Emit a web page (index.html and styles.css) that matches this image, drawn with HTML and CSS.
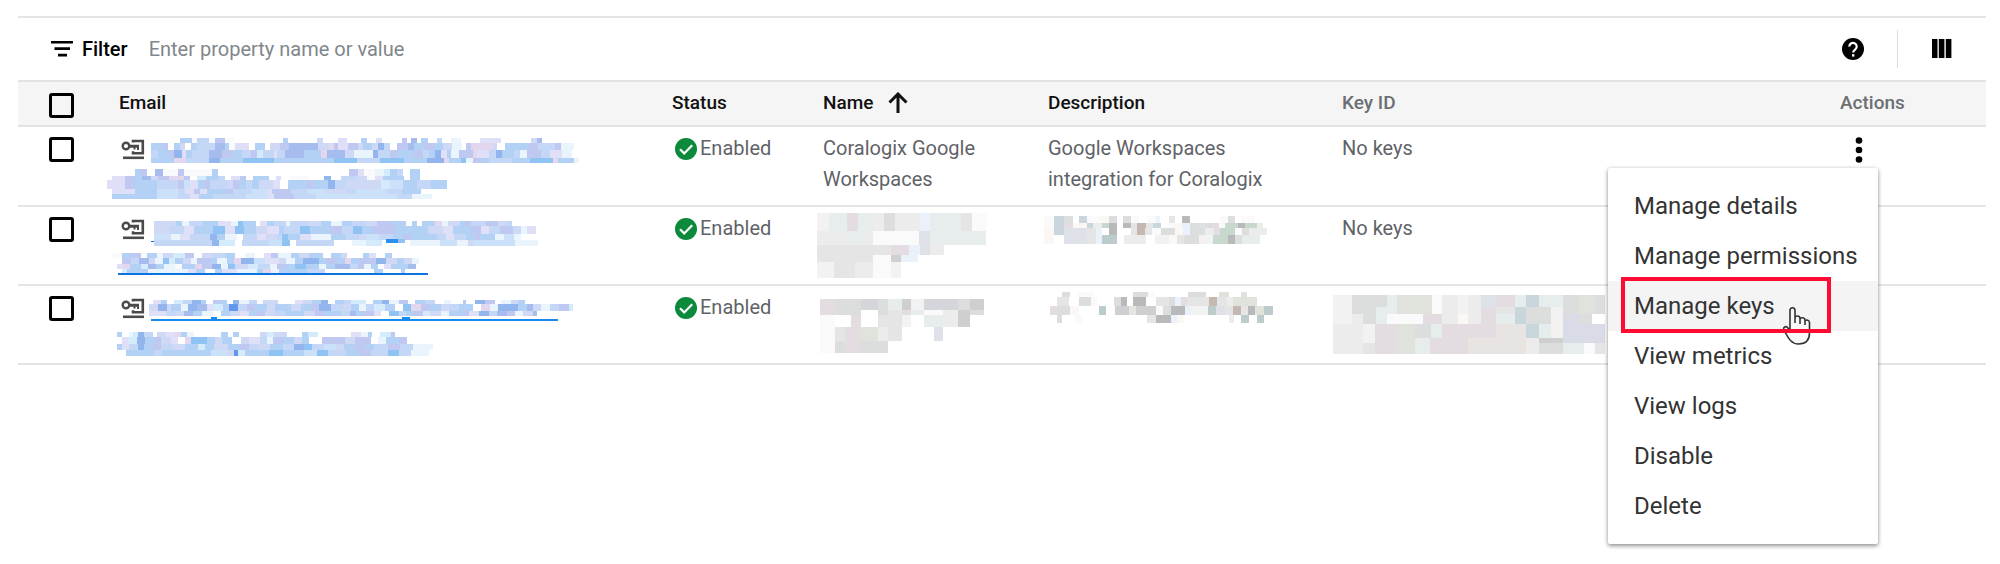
FILE: index.html
```html
<!DOCTYPE html>
<html lang="en">
<head>
<meta charset="utf-8">
<title>Service accounts</title>
<link rel="stylesheet" href="styles.css">
</head>
<body>
<svg class="defs" width="0" height="0" aria-hidden="true">
  <symbol id="key" viewBox="-2 0 26 22">
    <circle cx="5" cy="7" r="3.300" fill="none" stroke="#4a4a4a" stroke-width="2.400"/>
    <path d="M8 5.700h10v5.300h-2V8.700h-1.500V10.500h-2V8.700H8z" fill="#4a4a4a"/>
    <path d="M12 3.500V2h9.800v12.200H12v-2" fill="none" stroke="#4a4a4a" stroke-width="2.600"/>
    <path d="M2 17.500h21v2.600H2z" fill="#4a4a4a"/>
  </symbol>
  <symbol id="ok" viewBox="0 0 22 22">
    <circle cx="11" cy="11" r="11" fill="#0a8a3a"/>
    <path d="M5 11.200l4.200 4.200 8-8.200" fill="none" stroke="#fff" stroke-width="2.200"/>
  </symbol>
</svg>
<main class="panel">
  <form class="filter">
    <svg class="filter-icon" viewBox="0 0 22 16" aria-hidden="true"><path d="M0 0h22v2.600H0zM3.500 6.300h15.500v2.600H3.500zM7 12.800h9v2.600H7z"/></svg>
    <label class="filter-label" for="filter">Filter</label>
    <input class="filter-input" id="filter" type="text" placeholder="Enter property name or value">
    <button class="icon-button help" type="button" aria-label="Help">
      <svg width="22" height="22" viewBox="0 0 22 22"><circle cx="11" cy="11" r="11"/><path d="M7.300 8.600a3.700 3.600 0 1 1 6 2.700c-1.400 1-2.100 1.500-2.100 3.200" fill="none" stroke="#fff" stroke-width="2.200"/><path d="M10 16.200h2.400v2.400H10z" fill="#fff"/></svg>
    </button>
    <span class="divider"></span>
    <button class="icon-button" type="button" aria-label="Column display options">
      <svg width="20" height="20" viewBox="0 0 20 20"><path d="M0 0h5.500v19H0zM6.800 0h5.600v19H6.800zM13.800 0h5.600v19h-5.600z"/></svg>
    </button>
  </form>
  <table class="accounts">
    <colgroup><col class="c-check"><col class="c-email"><col class="c-status"><col class="c-name"><col class="c-desc"><col class="c-key"><col class="c-actions"></colgroup>
    <thead>
      <tr>
        <th class="check"><input type="checkbox" aria-label="Select all"></th>
        <th>Email</th>
        <th>Status</th>
        <th><span class="sorted">Name <svg width="20" height="21" viewBox="0 0 20 21" aria-hidden="true"><path d="M10 21V2M1.500 10.500L10 2l8.500 8.500" fill="none" stroke="#111" stroke-width="3"/></svg></span></th>
        <th>Description</th>
        <th class="muted">Key ID</th>
        <th class="muted">Actions</th>
      </tr>
    </thead>
    <tbody>
      <tr>
        <td class="check"><input type="checkbox" aria-label="Select account 1"></td>
        <td><a class="email" href="#" aria-label="Account 1">
          <span class="email-line"><svg class="key-icon"><use href="#key"/></svg><svg data-mosaic="e1a"></svg></span>
          <span class="email-line outdent"><svg data-mosaic="e1b"></svg></span></a></td>
        <td><span class="status"><svg class="ok-icon"><use href="#ok"/></svg>Enabled</span></td>
        <td class="text">Coralogix Google<br>Workspaces</td>
        <td class="text">Google Workspaces<br>integration for Coralogix</td>
        <td class="text">No keys</td>
        <td class="actions">
          <button class="icon-button more" type="button" aria-label="Actions" aria-expanded="true"><svg width="8" height="26" viewBox="0 0 8 26"><circle cx="4" cy="3.500" r="3.300"/><circle cx="4" cy="13" r="3.300"/><circle cx="4" cy="22.500" r="3.300"/></svg></button>
          <div class="menu" role="menu">
            <button type="button" role="menuitem">Manage details</button>
            <button type="button" role="menuitem">Manage permissions</button>
            <button class="hovered" type="button" role="menuitem">Manage keys</button>
            <button type="button" role="menuitem">View metrics</button>
            <button type="button" role="menuitem">View logs</button>
            <button type="button" role="menuitem">Disable</button>
            <button type="button" role="menuitem">Delete</button>
            <svg class="pointer" viewBox="0 0 30 40" aria-hidden="true"><path d="M8 25V4.500c0-3.600 5-3.600 5 0V17v-5.500c1-2.600 5-1.600 5 1V18v-5c1-2.200 5-1.400 5 1.200V19v-4c1.500-1.800 4.500-.8 4.500 1.500V27c0 7-4 11-11 11C10 38 7 34 2 24c-1.500-3 2-4.500 4-2l2 3" fill="#f7f7f7" stroke="#333" stroke-width="1.600"/></svg>
            <span class="highlight"></span>
          </div>
        </td>
      </tr>
      <tr>
        <td class="check"><input type="checkbox" aria-label="Select account 2"></td>
        <td><a class="email" href="#" aria-label="Account 2">
          <span class="email-line"><svg class="key-icon"><use href="#key"/></svg><svg data-mosaic="e2a"></svg></span>
          <span class="email-line outdent"><svg data-mosaic="e2b"></svg></span></a></td>
        <td><span class="status"><svg class="ok-icon"><use href="#ok"/></svg>Enabled</span></td>
        <td><svg class="block" data-mosaic="n2"></svg></td>
        <td><svg class="block" data-mosaic="d2"></svg></td>
        <td class="text">No keys</td>
        <td></td>
      </tr>
      <tr>
        <td class="check"><input type="checkbox" aria-label="Select account 3"></td>
        <td><a class="email" href="#" aria-label="Account 3">
          <span class="email-line"><svg class="key-icon"><use href="#key"/></svg><svg data-mosaic="e3a"></svg></span>
          <span class="email-line outdent"><svg data-mosaic="e3b"></svg></span></a></td>
        <td><span class="status"><svg class="ok-icon"><use href="#ok"/></svg>Enabled</span></td>
        <td><svg class="block" data-mosaic="n3"></svg></td>
        <td><svg class="block" data-mosaic="d3"></svg></td>
        <td><svg class="block" data-mosaic="k3"></svg></td>
        <td></td>
      </tr>
    </tbody>
  </table>
</main>
<script src="mosaic.js"></script>
</body>
</html>
```
FILE: styles.css
```css
* { box-sizing: border-box; }
body {
  margin: 0;
  min-height: 100vh;
  display: flex;
  flex-direction: column;
  background: #fff;
  color: #111;
  font-family: Roboto, "Liberation Sans", sans-serif;
  font-size: 20px;
  line-height: 31px;
}
button { font: inherit; color: inherit; background: none; border: 0; padding: 0; cursor: pointer; }
.defs { position: absolute; }
.panel { flex: 1; margin: 16px 14px 0 18px; border-top: 2px solid #e5e5e5; }
.filter { display: flex; align-items: center; height: 62px; padding: 0 34px 0 33px; }
.filter-icon { width: 22px; height: 16px; margin-right: 9px; }
.filter-label { font-weight: 500; color: #000; }
.filter-input {
  flex: 1;
  min-width: 0;
  margin-left: 21px;
  padding: 0;
  border: 0;
  outline: 0;
  background: none;
  font: inherit;
}
.filter-input::placeholder { color: #80868b; opacity: 1; }
.icon-button { display: inline-flex; align-items: center; justify-content: center; }
.divider { width: 1px; height: 38px; margin: 0 34px 0 33px; background: #dcdcdc; }

.accounts { width: 100%; table-layout: fixed; border-collapse: separate; border-spacing: 0; }
.c-check { width: 101px; }
.c-email { width: 553px; }
.c-status { width: 151px; }
.c-name { width: 225px; }
.c-desc { width: 294px; }
.c-key { width: 498px; }
.c-actions { width: 146px; }
th {
  height: 47px;
  padding: 0 0 2px;
  background: #f5f5f5;
  border-top: 2px solid #e2e2e2;
  border-bottom: 2px solid #e2e2e2;
  text-align: left;
  font-size: 19px;
  font-weight: 500;
}
th.muted { color: #6b6f73; }
td { height: 79px; padding: 0; vertical-align: top; border-bottom: 2px solid #e5e5e5; color: #5f6368; }
tbody tr:first-child td { height: 80px; }
td.text { padding-top: 6px; }
.check { padding-left: 31px; }
th.check { padding-top: 3px; padding-bottom: 0; }
td.check { padding-top: 10px; }
.check input {
  display: block;
  appearance: none;
  width: 25px;
  height: 25px;
  margin: 0;
  border: 3px solid #000;
  border-radius: 3px;
  background: transparent;
}
.sorted { display: flex; align-items: center; gap: 15px; }
.status { display: flex; align-items: center; gap: 3px; padding: 6px 0 0 3px; }
.ok-icon { width: 22px; height: 22px; }
.email { display: flex; flex-direction: column; gap: 4px; padding-top: 8px; }
.email-line { display: flex; align-items: center; gap: 4px; height: 30px; }
.outdent { margin-left: -12px; }
.key-icon { width: 26px; height: 22px; flex: none; }
[data-mosaic] { flex: none; overflow: visible; }
.block { display: block; margin-left: -6px; }
td.actions { position: relative; padding: 10px 0 0 15px; }
.more { height: 26px; }

.menu {
  position: absolute;
  top: 41px;
  right: 108px;
  z-index: 1;
  width: 270px;
  padding: 13px 0;
  background: #fff;
  border-radius: 2px;
  box-shadow: 0 2px 4px rgba(0, 0, 0, .4), 0 0 4px rgba(0, 0, 0, .1);
  color: #333;
  font-size: 24px;
}
.menu button { display: block; width: 100%; height: 50px; padding-left: 26px; text-align: left; }
.menu .hovered { background: #f4f4f4; }
.pointer { position: absolute; left: 174px; top: 138px; width: 30px; height: 40px; }
.highlight { position: absolute; left: 13px; top: 109px; width: 210px; height: 56px; border: 4px solid #ff0a32; }
```
FILE: mosaic.js
```js
// Redaction blocks. Each row is [y, height, x, runs]; a run is a colour key and a width,
// all in thirds of a pixel. "." leaves a gap.
const COLORS = {
  a: '#cbe1f9', b: '#b3d1f5', c: '#8fc3f4', d: '#bfc8f1', e: '#a6bcef', f: '#dfe0f7',
  g: '#cfd9f5', h: '#e9f4fd', i: '#c4d7f6', j: '#93b5ee', k: '#6397ea', l: '#fafafd',
  m: '#d3ebfa', n: '#e3d6ef', q: '#2c8eee', u: '#0b74e0', v: '#1b8aee',
  A: '#f2f2f2', B: '#ececec', C: '#e5e5e6', D: '#dcdddd', E: '#cfcfcf', F: '#b8b9ba',
  G: '#e3dde2', H: '#dfe1e9', I: '#e7ecec', J: '#c9d6db', K: '#e0e2dc', L: '#fafafa',
  M: '#bccccd', N: '#c8d8cc', O: '#e8e4e1', P: '#d9dbe6', Q: '#c4b8b1', R: '#faf7f5',
  S: '#eaf1fa', T: '#d5d5dc'
};
const MOSAICS = {
  e1a: { box: [147, 15, 1300, 90], rows: [
    [24, 15, 240, 'b36 l14 i37 l18 d30 l30 .144 b15 .87 g18 .45 f28 .42 b18 .27 f18 .60 d15 .12 e18 .12 b20 .27 i15 .27 h30 .57 f62 .91 g18 e15'],
    [39, 21, 153, 'b36 d15 .18 b18 g15 .18 b18 i53 e30 b14 l18 f40 .18 b32 .15 g30 d25 e53 e36 g32 n14 d14 f28 d30 g15 b27 g20 j18 i18 .20 d32 e18 b30 d30 b28 g28 h28 .12 d16 n65 g14 .24 b32 b38 d28 i50 d20 h37'],
    [60, 24, 153, 'i21 b35 d13 j24 f12 b18 i50 e40 d34 b27 i27 d16 m20 i32 f10 i22 e58 b50 n20 e52 g27 h58 j14 i37 d22 b50 d28 i18 b18 j16 f18 b12 h24 d42 n14 f36 i20 j18 b36 i18 h22 d42 i27 f36 h30'],
    [84, 15, 153, 'b69 n36 i69 j33 b69 c93 b111 b70 c68 i70 c70 b69 j53 n15 b36 c14 h22 d26 b20 i70 b54 c69 n14 b50 h15'] ] },
  e1b: { box: [21, 117, 990, 90], rows: [
    [117, 20, 105, 'b18 d18 .24 e24 l44 d18 l84 b18 .393 d28 f18 l34 h25 m18 b22 i18 .21 b30'],
    [137, 14, 36, 'f39 d30 b20 e28 g20 d35 n45 d18 .20 m28 b38 i18 .18 f28 d18 .20 b48 .22 f14 .23 l60 .45 j22 .30 i48 g30 l24 f24 b32 b30 .20 b30'],
    [151, 26, 21, 'f54 d30 b65 i65 d18 a18 f22 b18 d20 i52 g16 d18 b20 i18 b22 g42 f20 .24 b58 d18 b46 j20 i34 g60 g45 m26 a40 b42 i42 b48'],
    [177, 15, 36, 'f69 b66 a64 i20 f28 d18 f20 b60 d18 i55 a46 f16 d58 i46 a54 g68 i25 a95 i44 b58'],
    [192, 15, 36, 'b69 b66 a64 i36 f26 b43 i99 a64 f20 d60 i66 a78 a165 i45 h60'] ] },
  e2a: { box: [147, 15, 1200, 90], rows: [
    [33, 16, 162, 'g66 b18 h20 i42 b45 f40 h22 c14 b40 .12 f20 b20 i38 h10 i54 g40 b30 h34 b28 i44 g32 d46 b40 .20 b14 .14 b40 n20 h18 g36 b14 d20 i44 d36 g24 i20'],
    [49, 22, 162, 'g48 i42 f30 b56 c36 f32 c26 b36 g34 f36 b14 i48 c30 b60 d36 i34 c26 b30 d68 b64 b36 g46 f30 b52 d30 f24 i34 d40 g22 h20 f25'],
    [71, 20, 162, 'a50 h28 f30 i60 j22 b22 h36 .18 i42 f28 g34 i14 c18 b36 f34 h60 b44 i40 g20 a40 i40 b30 d26 b78 i26 f24 i36 b24 d18 b44 h28 a30 h20'],
    [91, 16, 162, 'i48 i126 j22 m48 .21 i80 a38 c24 .20 i112 .56 h40 m50'],
    [87, 12, 858, 'q36 c20'],
    [91, 16, 930, 'h90 a50 h34 g18 a122 h70'],
    [93, 4, 153, 'u9'] ] },
  e2b: { box: [21, 117, 990, 90], rows: [
    [129, 16, 40, 'l26 b26 d30 l20 b28 h18 g30 m36 d28 .24 g34 i36 b14 b16 .30 h30 .26 f20 d22 h40 b24 g30 b40 .24 b30 g20 .46 b20 f20 .26 b22'],
    [145, 16, 66, 'd26 i24 e30 g18 h24 c20 m16 b26 g22 h20 d40 b20 h30 b20 n20 j40 a34 f40 g22 h26 b24 j48 b22 d34 b22 n20 b24 d50 j30 g34 b20 g24 h20'],
    [161, 15, 51, 'f18 n20 b34 m20 e26 b22 h34 l22 b38 n22 d28 j28 h22 c20 g40 m30 i36 h20 d26 b28 c32 b40 h20 b28 e44 i24 d20 h20 b20 .20 f20 b50 e26'],
    [176, 14, 66, 'm14 b64 h120 f24 b28 .28 b22 f44 h60 b20 n24 h24 b84 i54 .146 b26 .54 b12'],
    [190, 6, 54, 'u930'] ] },
  e3a: { box: [147, 252, 1250, 90], rows: [
    [270, 12, 160, 'f22 b20 .20 m26 i28 j26 b16 .20 d20 b24 .16 j20 h30 i22 l20 g44 .50 f26 g26 b28 j20 .20 b28 i20 m46 .20 b28 j20 h32 d26 .20 b30 i32 .26 h20 .36 d10 .26 j30 d30 .20 h30 g20 b22'],
    [282, 20, 148, 'g26 j26 g14 b30 h20 j28 e28 f20 m28 b20 k26 i26 d26 b34 g26 b46 g30 b34 d22 j36 i36 g22 b26 h20 i24 m32 b30 .24 c26 n30 d26 b34 g22 i32 b42 .24 n26 h24 j60 b26 e20 g22 h28 i26 d30 m12'],
    [302, 16, 148, 'f50 i28 g26 e26 b28 h34 .22 b28 g30 f26 b22 d28 g26 i34 b56 g34 d26 b50 i28 e18 b20 d34 f22 .24 c28 i22 b20 d30 m22 g32 h26 b40 d20 f30 j30 i24 e28 d26 h24 g30 e12'],
    [327, 6, 153, 'v1221'],
    [322, 5, 332, 'v20 .555 v22'] ] },
  e3b: { box: [21, 354, 1015, 90], rows: [
    [366, 16, 50, 'b16 .20 h14 m14 j18 i28 .12 g22 f30 n18 b20 h20 .80 b22 .14 b18 .65 g20 m20 g40 .44 b20 m28 .100 f30 h20 b12 .26 m32 d12'],
    [382, 20, 66, 'f18 m28 j22 b30 d20 g28 f22 .20 n20 c46 b24 g22 b30 .28 g22 f34 i20 h18 d30 b34 g24 b22 .38 d70 g30 d46 .22 h24 b40 d22'],
    [402, 18, 51, 'b16 f20 i26 j20 b26 d24 i34 g38 b38 m22 b28 g40 b34 d30 i28 g34 b40 i34 j30 c24 i36 a34 g26 b30 d36 b24 i40 d36 i40 h60'],
    [420, 18, 78, 'b84 i24 b146 a50 g20 k12 m20 b74 c42 b62 a40 c32 i54 b38 d38 i50 c34 i34 h54'] ] },
  n2: { box: [651, 441, 520, 225], rows: [
    [459, 56, 651, 'A36 I54 G33 I45 B34 D33 B75 S30 I91 C33 L45'],
    [513, 42, 651, 'B90 I42 B36 L138 H33 I168'], [555, 30, 651, 'C168 C54 G54 S33 H30 B42'],
    [585, 22, 651, 'C168 L54 E30 S52'], [606, 48, 651, 'A51 C64 B53 L54 A30'] ] },
  n3: { box: [651, 678, 520, 225], rows: [
    [717, 33, 660, 'G45 D78 T51 D30 I42 E27 A39 T102 D36 E42'], [750, 15, 660, 'G45 D78 .51 D30 C42 G27 I39 L57 B45 E36 D42'],
    [765, 35, 660, 'L45 .48 G30 .51 C72 A27 .39 I57 B45 E35'], [800, 42, 660, 'L45 C30 G48 K51 B30 C42 .96 H27'],
    [842, 37, 660, 'L45 D30 G48 D81'] ] },
  d2: { box: [126, 441, 700, 120], rows: [
    [468, 20, 132, 'L30 J30 D26 .20 J24 L40 R24 D24 .18 D24 l24 .26 L26 h12 .26 C20 .20 F24 .90 L24 D20 .20 L40'],
    [488, 16, 132, 'L30 J30 G26 R44 J18 B26 N20 F24 .18 F24 C20 Q26 C20 J24 .20 L24 R20 S24 D26 H18 D24 G20 L16 N40 F22 N34 B20'],
    [504, 20, 132, 'R30 J30 H70 C26 S18 .22 F24 .40 C20 Q24 C20 L26 D44 R22 S22 D44 B28 G18 N46 L20 D20 B54'],
    [524, 28, 132, 'R30 .30 H70 C26 S18 M46 .20 B66 .26 A42 R24 C22 D44 A42 N46 F22 D20 I54'] ] },
  d3: { box: [126, 678, 700, 120], rows: [
    [696, 16, 186, 'D24 .24 L44 .122 D44 L20 .100 D54 .38 K32 .34 K18'],
    [712, 26, 170, 'C36 .30 D36 L20 .50 D20 F18 .20 F38 .30 C40 D16 S18 G20 C66 Q22 C30 B18 K50 K24'],
    [738, 26, 150, 'G20 D40 R28 .58 M22 .26 E42 O22 E60 L20 D26 F42 S18 A50 M24 H28 C24 Q22 C22 F22 K26 M26'],
    [764, 26, 170, 'D16 .40 L20 .180 .16 C26 F46 S18 R20 .136 B14 .22 M24 .24 M21'] ] },
  k3: { box: [51, 3, 813, 225], rows: [
    [30, 35, 42, 'A57 D72 D33 I30 K105 L30 B48 A30 B39 H45 G57 I33 J39 I36 I36 D48 K48 D31'],
    [65, 22, 42, 'A57 D33 D39 I33 I30 K105 L30 B48 A30 B39 G45 C57 J33 D75 A36 D48 K48 D31'],
    [87, 30, 42, 'A57 B33 D39 I33 L107 G58 B48 R30 B39 G45 I57 J33 D75 A36 P48 D39 .39'],
    [117, 42, 42, 'B90 A36 G36 G30 K54 D48 I33 G161 O91 J39 I36 A36 P126'],
    [159, 15, 42, 'B90 A36 G36 G30 K54 I45 G36 G78 O174 B39 E72 P126'],
    [174, 33, 42, 'B90 C36 G36 G30 K54 I45 G36 G78 O174 B39 D72 I63 l33 C30'] ] }
};
const NS = 'http://www.w3.org/2000/svg';
document.querySelectorAll('[data-mosaic]').forEach(function (svg) {
  const m = MOSAICS[svg.dataset.mosaic];
  const width = Math.round(m.box[2] / 3);
  const height = Math.round(m.box[3] / 3);
  svg.setAttribute('viewBox', [m.box[0], m.box[1], width * 3, height * 3].join(' '));
  svg.setAttribute('width', width);
  svg.setAttribute('height', height);
  svg.setAttribute('shape-rendering', 'crispEdges');
  m.rows.forEach(function (row) {
    let x = row[2];
    row[3].split(' ').forEach(function (run) {
      const w = Number(run.slice(1));
      if (run[0] !== '.') {
        const r = document.createElementNS(NS, 'rect');
        r.setAttribute('x', x);
        r.setAttribute('y', row[0]);
        r.setAttribute('width', w);
        r.setAttribute('height', row[1]);
        r.setAttribute('fill', COLORS[run[0]]);
        svg.appendChild(r);
      }
      x += w;
    });
  });
});
```
